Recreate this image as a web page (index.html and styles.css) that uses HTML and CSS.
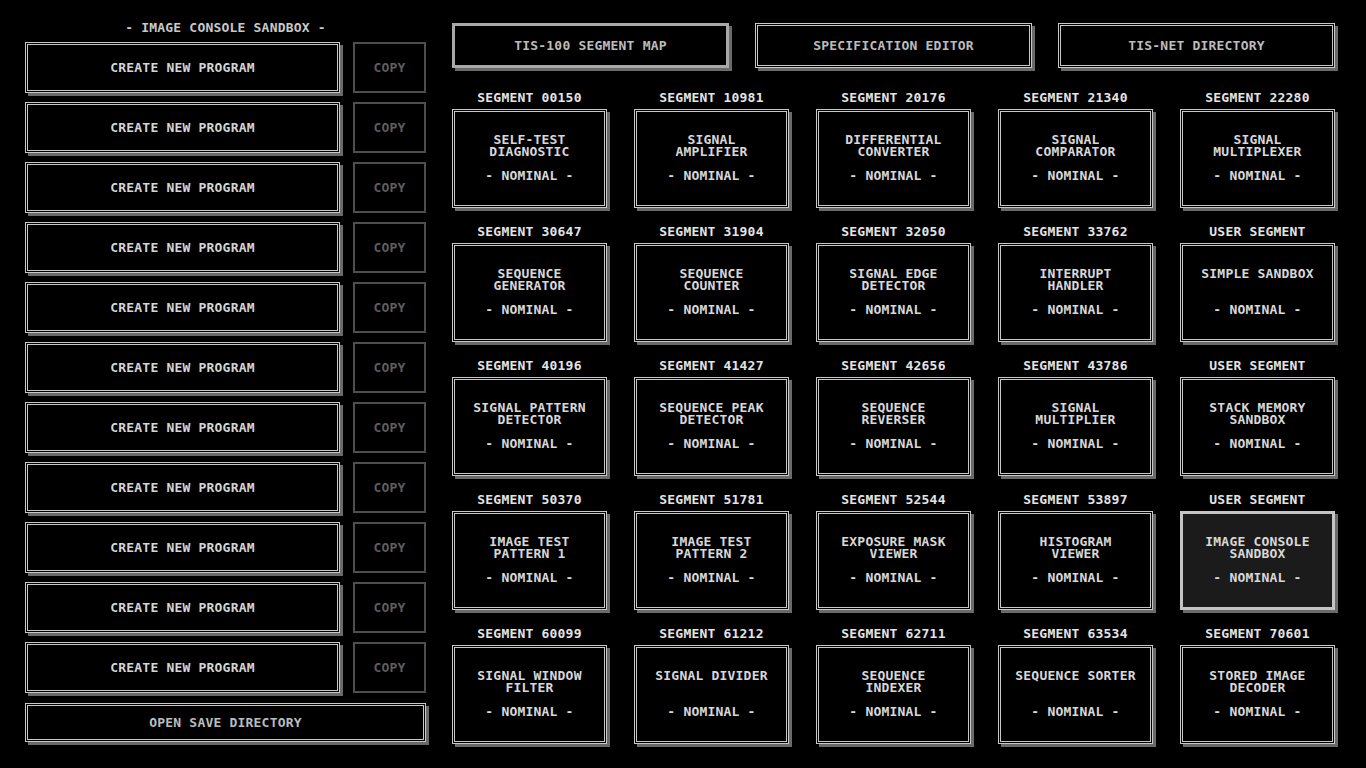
FILE: index.html
```html
<!DOCTYPE html>
<html>
<head>
<meta charset="utf-8">
<link rel="stylesheet" href="styles.css">
</head>
<body>
<div class="page">
  <div class="left">
    <div class="left-title">- IMAGE CONSOLE SANDBOX -</div>
    <div class="programs">
      <div class="prow"><div class="btn create">CREATE NEW PROGRAM</div><div class="copy">COPY</div></div>
      <div class="prow"><div class="btn create">CREATE NEW PROGRAM</div><div class="copy">COPY</div></div>
      <div class="prow"><div class="btn create">CREATE NEW PROGRAM</div><div class="copy">COPY</div></div>
      <div class="prow"><div class="btn create">CREATE NEW PROGRAM</div><div class="copy">COPY</div></div>
      <div class="prow"><div class="btn create">CREATE NEW PROGRAM</div><div class="copy">COPY</div></div>
      <div class="prow"><div class="btn create">CREATE NEW PROGRAM</div><div class="copy">COPY</div></div>
      <div class="prow"><div class="btn create">CREATE NEW PROGRAM</div><div class="copy">COPY</div></div>
      <div class="prow"><div class="btn create">CREATE NEW PROGRAM</div><div class="copy">COPY</div></div>
      <div class="prow"><div class="btn create">CREATE NEW PROGRAM</div><div class="copy">COPY</div></div>
      <div class="prow"><div class="btn create">CREATE NEW PROGRAM</div><div class="copy">COPY</div></div>
      <div class="prow"><div class="btn create">CREATE NEW PROGRAM</div><div class="copy">COPY</div></div>
    </div>
    <div class="btn opensave">OPEN SAVE DIRECTORY</div>
  </div>
  <div class="right">
    <div class="tabs">
      <div class="btn tab selected">TIS-100 SEGMENT MAP</div>
      <div class="btn tab">SPECIFICATION EDITOR</div>
      <div class="btn tab">TIS-NET DIRECTORY</div>
    </div>
    <div class="grid">
      <div class="cell"><div class="label">SEGMENT 00150</div><div class="tile"><div class="name"><div>SELF-TEST</div><div>DIAGNOSTIC</div></div><div class="status">- NOMINAL -</div></div></div>
      <div class="cell"><div class="label">SEGMENT 10981</div><div class="tile"><div class="name"><div>SIGNAL</div><div>AMPLIFIER</div></div><div class="status">- NOMINAL -</div></div></div>
      <div class="cell"><div class="label">SEGMENT 20176</div><div class="tile"><div class="name"><div>DIFFERENTIAL</div><div>CONVERTER</div></div><div class="status">- NOMINAL -</div></div></div>
      <div class="cell"><div class="label">SEGMENT 21340</div><div class="tile"><div class="name"><div>SIGNAL</div><div>COMPARATOR</div></div><div class="status">- NOMINAL -</div></div></div>
      <div class="cell"><div class="label">SEGMENT 22280</div><div class="tile"><div class="name"><div>SIGNAL</div><div>MULTIPLEXER</div></div><div class="status">- NOMINAL -</div></div></div>

      <div class="cell"><div class="label">SEGMENT 30647</div><div class="tile"><div class="name"><div>SEQUENCE</div><div>GENERATOR</div></div><div class="status">- NOMINAL -</div></div></div>
      <div class="cell"><div class="label">SEGMENT 31904</div><div class="tile"><div class="name"><div>SEQUENCE</div><div>COUNTER</div></div><div class="status">- NOMINAL -</div></div></div>
      <div class="cell"><div class="label">SEGMENT 32050</div><div class="tile"><div class="name"><div>SIGNAL EDGE</div><div>DETECTOR</div></div><div class="status">- NOMINAL -</div></div></div>
      <div class="cell"><div class="label">SEGMENT 33762</div><div class="tile"><div class="name"><div>INTERRUPT</div><div>HANDLER</div></div><div class="status">- NOMINAL -</div></div></div>
      <div class="cell"><div class="label">USER SEGMENT</div><div class="tile"><div class="name"><div>SIMPLE SANDBOX</div></div><div class="status">- NOMINAL -</div></div></div>

      <div class="cell"><div class="label">SEGMENT 40196</div><div class="tile"><div class="name"><div>SIGNAL PATTERN</div><div>DETECTOR</div></div><div class="status">- NOMINAL -</div></div></div>
      <div class="cell"><div class="label">SEGMENT 41427</div><div class="tile"><div class="name"><div>SEQUENCE PEAK</div><div>DETECTOR</div></div><div class="status">- NOMINAL -</div></div></div>
      <div class="cell"><div class="label">SEGMENT 42656</div><div class="tile"><div class="name"><div>SEQUENCE</div><div>REVERSER</div></div><div class="status">- NOMINAL -</div></div></div>
      <div class="cell"><div class="label">SEGMENT 43786</div><div class="tile"><div class="name"><div>SIGNAL</div><div>MULTIPLIER</div></div><div class="status">- NOMINAL -</div></div></div>
      <div class="cell"><div class="label">USER SEGMENT</div><div class="tile"><div class="name"><div>STACK MEMORY</div><div>SANDBOX</div></div><div class="status">- NOMINAL -</div></div></div>

      <div class="cell"><div class="label">SEGMENT 50370</div><div class="tile"><div class="name"><div>IMAGE TEST</div><div>PATTERN 1</div></div><div class="status">- NOMINAL -</div></div></div>
      <div class="cell"><div class="label">SEGMENT 51781</div><div class="tile"><div class="name"><div>IMAGE TEST</div><div>PATTERN 2</div></div><div class="status">- NOMINAL -</div></div></div>
      <div class="cell"><div class="label">SEGMENT 52544</div><div class="tile"><div class="name"><div>EXPOSURE MASK</div><div>VIEWER</div></div><div class="status">- NOMINAL -</div></div></div>
      <div class="cell"><div class="label">SEGMENT 53897</div><div class="tile"><div class="name"><div>HISTOGRAM</div><div>VIEWER</div></div><div class="status">- NOMINAL -</div></div></div>
      <div class="cell"><div class="label">USER SEGMENT</div><div class="tile active"><div class="name"><div>IMAGE CONSOLE</div><div>SANDBOX</div></div><div class="status">- NOMINAL -</div></div></div>

      <div class="cell"><div class="label">SEGMENT 60099</div><div class="tile"><div class="name"><div>SIGNAL WINDOW</div><div>FILTER</div></div><div class="status">- NOMINAL -</div></div></div>
      <div class="cell"><div class="label">SEGMENT 61212</div><div class="tile"><div class="name"><div>SIGNAL DIVIDER</div></div><div class="status">- NOMINAL -</div></div></div>
      <div class="cell"><div class="label">SEGMENT 62711</div><div class="tile"><div class="name"><div>SEQUENCE</div><div>INDEXER</div></div><div class="status">- NOMINAL -</div></div></div>
      <div class="cell"><div class="label">SEGMENT 63534</div><div class="tile"><div class="name"><div>SEQUENCE SORTER</div></div><div class="status">- NOMINAL -</div></div></div>
      <div class="cell"><div class="label">SEGMENT 70601</div><div class="tile"><div class="name"><div>STORED IMAGE</div><div>DECODER</div></div><div class="status">- NOMINAL -</div></div></div>
    </div>
  </div>
</div>
</body>
</html>
```

FILE: styles.css
```css
html, body {
  margin: 0;
  padding: 0;
  background: #000;
}
body {
  width: 1366px;
  height: 768px;
  overflow: hidden;
  font-family: "DejaVu Sans Mono", "Liberation Mono", monospace;
  font-weight: bold;
  font-size: 13px;
  letter-spacing: 0.2px;
  line-height: 12px;
  color: #d4d4d4;
}
.page {
  display: flex;
  align-items: flex-start;
  gap: 26px;
  padding: 22px 0 0 25px;
}
.left {
  width: 401px;
  display: flex;
  flex-direction: column;
}
.left-title {
  text-align: center;
  height: 12px;
  margin-bottom: 8px;
  color: #c8c8c8;
}
.programs {
  display: flex;
  flex-direction: column;
  gap: 9px;
}
.prow {
  display: flex;
  gap: 13px;
}
.btn {
  box-sizing: border-box;
  border: 3px double #c8c8c8;
  box-shadow: 3px 3px 0 #6a6a6a;
  display: flex;
  align-items: center;
  justify-content: center;
  background: #000;
}
.create {
  width: 315px;
  height: 51px;
  color: #d4d4d4;
}
.copy {
  box-sizing: border-box;
  width: 73px;
  height: 51px;
  border: 2px solid #4e4e4e;
  display: flex;
  align-items: center;
  justify-content: center;
  color: #5e5e5e;
}
.opensave {
  margin-top: 10px;
  width: 401px;
  height: 39px;
  color: #bcbcbc;
}
.right {
  width: 883px;
  padding-top: 1px;
}
.tabs {
  display: flex;
  gap: 26px;
  margin-bottom: 24px;
}
.tab {
  width: 277px;
  height: 45px;
  color: #bcbcbc;
}
.tab.selected {
  border: 3px solid #a8a8a8;
}
.grid {
  display: grid;
  grid-template-columns: repeat(5, 155px);
  column-gap: 27px;
  row-gap: 18px;
}
.cell {
  display: flex;
  flex-direction: column;
}
.label {
  text-align: center;
  height: 12px;
  margin-bottom: 5px;
  color: #e4e4e4;
}
.tile {
  box-sizing: border-box;
  height: 99px;
  border: 3px double #c8c8c8;
  box-shadow: 3px 3px 0 #6a6a6a;
  padding-top: 22px;
  text-align: center;
  color: #d8d8d8;
}
.tile.active {
  border: 3px solid #c4c4c4;
  background: #1b1b1b;
}
.name {
  height: 24px;
  margin-bottom: 12px;
}
.name > div {
  height: 12px;
}
.status {
  height: 12px;
}
```
